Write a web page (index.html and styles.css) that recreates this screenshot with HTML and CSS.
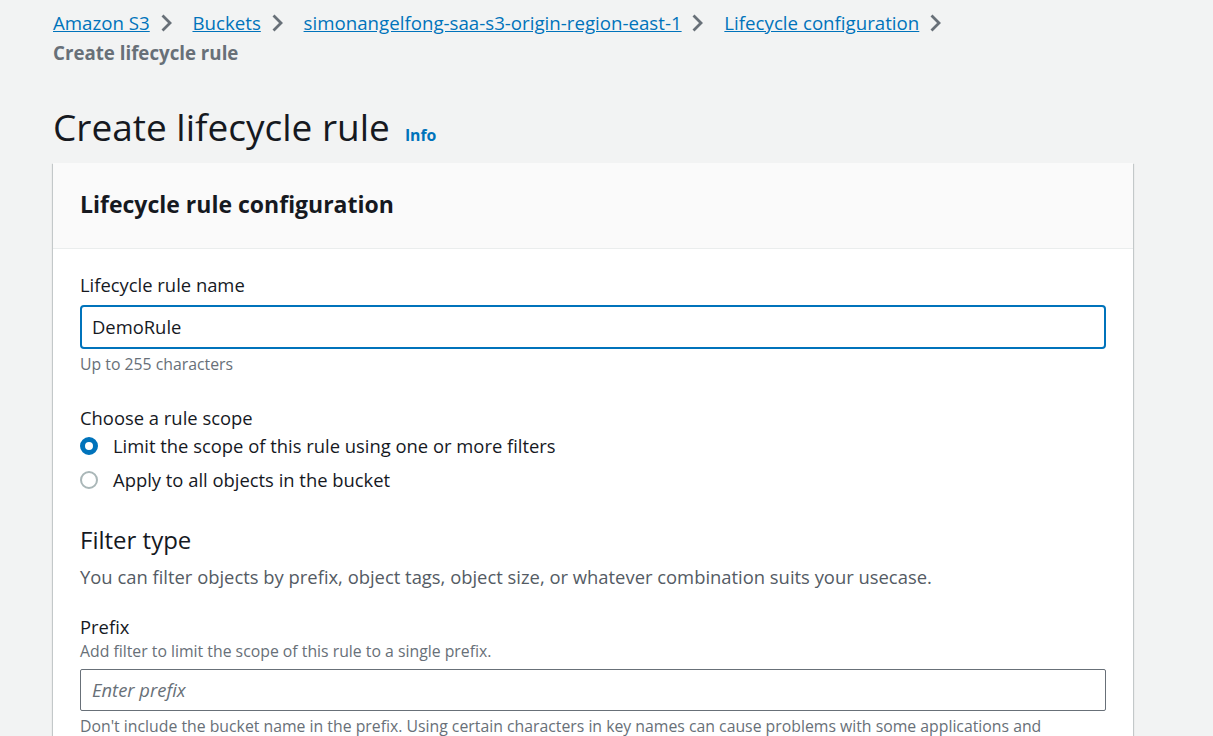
FILE: index.html
```html
<!DOCTYPE html>
<html lang="en">
<head>
<meta charset="UTF-8">
<title>Create lifecycle rule</title>
<link rel="stylesheet" href="styles.css">
</head>
<body>
<div class="page">
  <nav class="breadcrumbs">
    <a href="#">Amazon S3</a>
    <span class="chev"><svg width="13" height="18" viewBox="0 0 13 18"><path d="M2.5 1.5l7.5 7.5-7.5 7.5" fill="none" stroke="#687078" stroke-width="2.8"/></svg></span>
    <a href="#">Buckets</a>
    <span class="chev"><svg width="13" height="18" viewBox="0 0 13 18"><path d="M2.5 1.5l7.5 7.5-7.5 7.5" fill="none" stroke="#687078" stroke-width="2.8"/></svg></span>
    <a href="#">simonangelfong-saa-s3-origin-region-east-1</a>
    <span class="chev"><svg width="13" height="18" viewBox="0 0 13 18"><path d="M2.5 1.5l7.5 7.5-7.5 7.5" fill="none" stroke="#687078" stroke-width="2.8"/></svg></span>
    <a href="#">Lifecycle configuration</a>
    <span class="chev"><svg width="13" height="18" viewBox="0 0 13 18"><path d="M2.5 1.5l7.5 7.5-7.5 7.5" fill="none" stroke="#687078" stroke-width="2.8"/></svg></span>
    <span class="current">Create lifecycle rule</span>
  </nav>

  <div class="title-row">
    <h1>Create lifecycle rule</h1>
    <a class="info" href="#">Info</a>
  </div>

  <div class="card">
    <div class="card-header">
      <h2>Lifecycle rule configuration</h2>
    </div>
    <div class="card-body">
      <div class="field">
        <label class="label">Lifecycle rule name</label>
        <div class="input focused">DemoRule</div>
        <div class="hint">Up to 255 characters</div>
      </div>

      <div class="field scope">
        <div class="label">Choose a rule scope</div>
        <div class="radio"><span class="dot checked"></span>Limit the scope of this rule using one or more filters</div>
        <div class="radio"><span class="dot"></span>Apply to all objects in the bucket</div>
      </div>

      <div class="section">
        <h3>Filter type</h3>
        <p class="desc">You can filter objects by prefix, object tags, object size, or whatever combination suits your usecase.</p>
      </div>

      <div class="field">
        <div class="label">Prefix</div>
        <div class="sub">Add filter to limit the scope of this rule to a single prefix.</div>
        <div class="input empty">Enter prefix</div>
        <div class="hint">Don't include the bucket name in the prefix. Using certain characters in key names can cause problems with some applications and</div>
      </div>
    </div>
  </div>
</div>
</body>
</html>
```

FILE: styles.css
```css
html, body { margin: 0; padding: 0; background: #f2f3f3; }
body { font-family: "Open Sans", "Noto Sans", Arial, sans-serif; color: #16191f; font-size: 18.4px; }
.page { padding: 8px 80px 0 53px; }

.breadcrumbs { line-height: 30px; font-size: 18.7px; }
.breadcrumbs a { color: #0073bb; text-decoration: underline; }
.chev { display: inline-block; height: 18px; margin: 0 15px 0 5px; vertical-align: -2px; line-height: 0; }
.current { display: block; color: #687078; font-weight: 700; }

.title-row { display: flex; align-items: baseline; margin-top: 34px; }
h1 { margin: 0; font-size: 37px; font-weight: 400; line-height: 50px; }
.info { color: #0073bb; font-weight: 700; font-size: 15.8px; text-decoration: none; margin-left: 15px; }

.card { background: #fff; margin-top: 11px; box-shadow: 0 1px 1px 0 rgba(0,28,36,.3), 1px 1px 1px 0 rgba(0,28,36,.15), -1px 1px 1px 0 rgba(0,28,36,.15); }
.card-header { background: #fafafa; border-bottom: 1px solid #eaeded; padding: 25px 27px 27px; }
h2 { margin: 0; font-size: 23px; font-weight: 700; line-height: 33px; }
.card-body { padding: 22px 27px 10px; }

.label { display: block; line-height: 27px; }
.input { margin-top: 7px; height: 40px; border: 2px solid #0073bb; border-radius: 4px; padding: 0 10px; line-height: 40px; }
.input.empty { height: 40px; border: 1px solid #687078; border-radius: 2px; padding: 0 11px; line-height: 40px; color: #687078; font-style: italic; margin-top: 7px; }
.hint { color: #687078; font-size: 15.8px; line-height: 22px; margin-top: 4px; }
.sub { color: #687078; font-size: 15.8px; line-height: 22px; }

.scope { margin-top: 29px; }
.radio { display: flex; align-items: center; line-height: 34px; }
.scope .label { margin-bottom: -2px; }
.dot { width: 14px; height: 14px; border: 2px solid #aab7b8; border-radius: 50%; margin-right: 15px; box-sizing: content-box; }
.dot.checked { border: 5px solid #0073bb; width: 8px; height: 8px; background: #fff; }

.section { margin-top: 26px; }
h3 { margin: 0; font-size: 24px; font-weight: 400; line-height: 34px; }
.desc { margin: 6px 0 0; color: #545b64; line-height: 27px; }
.section + .field { margin-top: 23px; }
```
